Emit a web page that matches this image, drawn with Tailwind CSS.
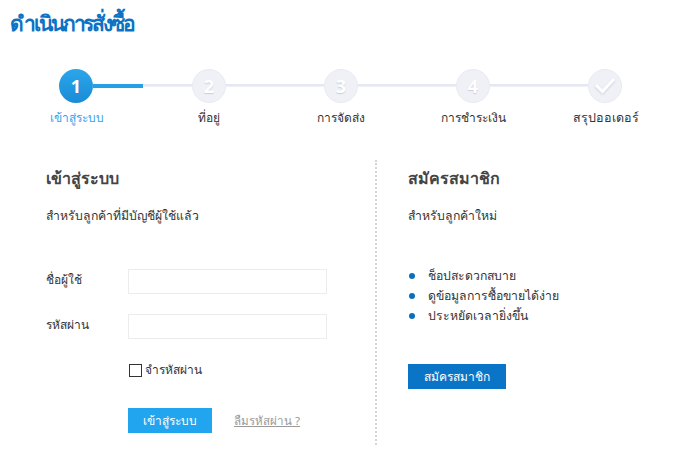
<!DOCTYPE html>
<html lang="th">
<head>
    <meta charset="UTF-8">
    <title>ดำเนินการสั่งซื้อ</title>
    <script src="https://cdn.jsdelivr.net/npm/@tailwindcss/browser@4"></script>
</head>
<body class="bg-white w-[694px] h-[474px] overflow-hidden font-['Noto_Sans','Liberation_Sans',sans-serif] text-[12px] text-[#333]">
    <h1 class="pl-[10px] pt-[6px] h-[69px] text-[21px] leading-[34px] font-bold text-[#0b72c4] tracking-[-2.100px]">ดำเนินการสั่งซื้อ</h1>

    <!-- steps -->
    <div class="flex items-center pl-[59px] w-[660px]">
        <div class="w-[34px] h-[34px] shrink-0 rounded-full bg-gradient-to-b from-[#2ba6ea] to-[#1b8bd6] text-white font-bold text-[18px] flex items-center justify-center">1</div>
        <div class="w-[99px] h-[2px] mb-[2px] bg-[#e6e8f1] shadow-[0_1px_1px_#eef0f6]"><div class="w-[50px] h-[4px] bg-[#259fe6]"></div></div>
        <div class="w-[34px] h-[34px] shrink-0 rounded-full bg-[#eff1f7] border border-[#e9ebf3] text-white font-bold text-[18px] [text-shadow:0_1px_1px_#c9cddb] flex items-center justify-center">2</div>
        <div class="w-[98px] h-[2px] mb-[2px] bg-[#e6e8f1] shadow-[0_1px_1px_#eef0f6]"></div>
        <div class="w-[34px] h-[34px] shrink-0 rounded-full bg-[#eff1f7] border border-[#e9ebf3] text-white font-bold text-[18px] [text-shadow:0_1px_1px_#c9cddb] flex items-center justify-center">3</div>
        <div class="w-[98px] h-[2px] mb-[2px] bg-[#e6e8f1] shadow-[0_1px_1px_#eef0f6]"></div>
        <div class="w-[34px] h-[34px] shrink-0 rounded-full bg-[#eff1f7] border border-[#e9ebf3] text-white font-bold text-[18px] [text-shadow:0_1px_1px_#c9cddb] flex items-center justify-center">4</div>
        <div class="w-[98px] h-[2px] mb-[2px] bg-[#e6e8f1] shadow-[0_1px_1px_#eef0f6]"></div>
        <div class="w-[34px] h-[34px] shrink-0 rounded-full bg-[#eff1f7] border border-[#e9ebf3] flex items-center justify-center">
            <svg width="22" height="18" viewBox="0 0 22 18" class="drop-shadow-[0_1px_1px_#c9cddb]"><path d="M2 8l6.500 6.500L20 2" fill="none" stroke="#fff" stroke-width="3"/></svg>
        </div>
    </div>
    <div class="grid grid-cols-5 ml-[11px] w-[661px] mt-[5px] text-center leading-[20px]">
        <div class="text-[#2ea5ee]">เข้าสู่ระบบ</div>
        <div>ที่อยู่</div>
        <div>การจัดส่ง</div>
        <div>การชำระเงิน</div>
        <div class="text-[12.500px]">สรุปออเดอร์</div>
    </div>

    <div class="flex mt-[32px]">
        <!-- login -->
        <div class="w-[329px] ml-[46px] pt-[6px]">
            <h2 class="text-[16px] font-bold leading-[24px] text-[#444]">เข้าสู่ระบบ</h2>
            <p class="mt-[16px] leading-[20px] text-[12.250px]">สำหรับลูกค้าที่มีบัญชีผู้ใช้แล้ว</p>
            <div class="flex items-center mt-[43px]">
                <label class="w-[82px] pb-[4px]">ชื่อผู้ใช้</label>
                <input type="text" class="w-[199px] h-[25px] border border-[#ececec] bg-white">
            </div>
            <div class="flex items-center mt-[20px]">
                <label class="w-[82px] pb-[3px]">รหัสผ่าน</label>
                <input type="text" class="w-[199px] h-[25px] border border-[#ececec] bg-white">
            </div>
            <div class="flex items-center gap-[3px] mt-[24px] ml-[83px] h-[14px]">
                <span class="w-[13px] h-[13px] border border-[#333] bg-white"></span>
                <span>จำรหัสผ่าน</span>
            </div>
            <div class="flex items-center mt-[31px] ml-[82px]">
                <button class="w-[84px] h-[25px] bg-[#21a5ee] text-white">เข้าสู่ระบบ</button>
                <a class="ml-[22px] text-[#999] underline text-[11.600px]">ลืมรหัสผ่าน ?</a>
            </div>
        </div>
        <div class="h-[285px] border-l-2 border-dotted border-[#d4d4d4]"></div>
        <!-- register -->
        <div class="ml-[31px] pt-[6px]">
            <h2 class="text-[16px] font-bold leading-[24px] text-[#444]">สมัครสมาชิก</h2>
            <p class="mt-[16px] leading-[20px] text-[12.250px]">สำหรับลูกค้าใหม่</p>
            <ul class="mt-[40px] leading-[20px] text-[12.250px]">
                <li class="flex items-center"><span class="w-[6px] h-[6px] rounded-full bg-[#0b6fbe] mr-[13px] ml-[1px]"></span>ช็อปสะดวกสบาย</li>
                <li class="flex items-center"><span class="w-[6px] h-[6px] rounded-full bg-[#0b6fbe] mr-[13px] ml-[1px]"></span>ดูข้อมูลการซื้อขายได้ง่าย</li>
                <li class="flex items-center"><span class="w-[6px] h-[6px] rounded-full bg-[#0b6fbe] mr-[13px] ml-[1px]"></span>ประหยัดเวลายิ่งขึ้น</li>
            </ul>
            <button class="mt-[38px] w-[98px] h-[25px] bg-[#0a74c6] text-white">สมัครสมาชิก</button>
        </div>
    </div>
</body>
</html>
